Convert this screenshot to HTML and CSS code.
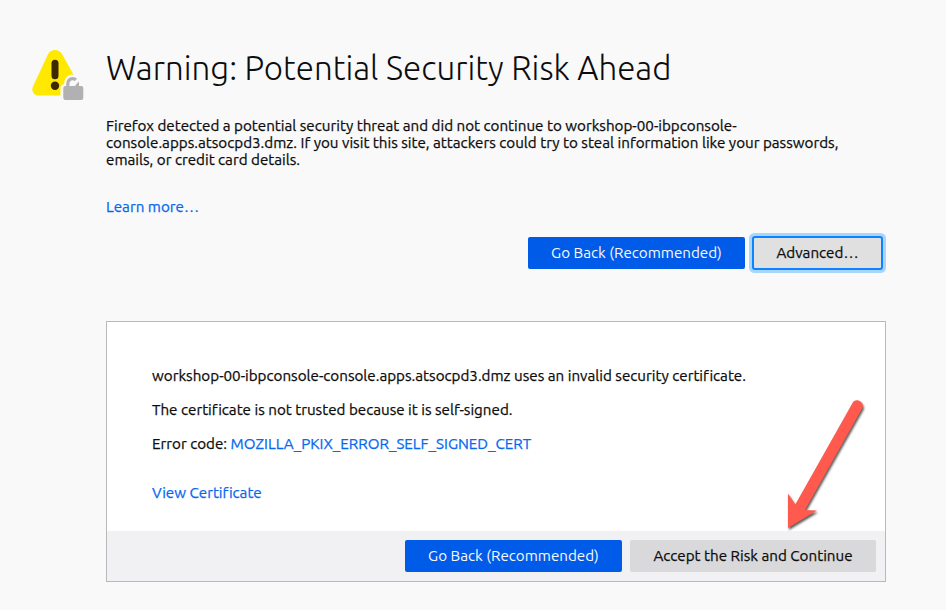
FILE: index.html
```html
<!DOCTYPE html>
<html lang="en">
<head>
<meta charset="utf-8">
<title>Warning: Potential Security Risk Ahead</title>
<link rel="stylesheet" href="styles.css">
</head>
<body>
<main class="page">
  <header class="title-row">
    <svg class="warning-icon" width="54" height="54" viewBox="0 0 54 54" aria-hidden="true">
      <path d="M16 5.300C19.200-.3 26.900-.3 30.100 5.300L44 30L33 46.500H6.500C1.500 46.500-1.200 41.500 1.200 37Z" fill="#ffe900"/>
      <rect x="19.500" y="10.700" width="7" height="19.500" rx="3.500" fill="#3e2800"/>
      <circle cx="23" cy="36.700" r="4.200" fill="#3e2800"/>
      <path d="M28.500 54V39Q28.500 36 32 35Q33 25.500 41 25.500Q49 25.500 50 35Q54 36 54 39V54Z" fill="#f9f9fa"/>
      <path d="M35.800 38V35Q36 29.600 40.800 29.600Q42.800 29.600 44 30.800" fill="none" stroke="#b1b1b3" stroke-width="3.200"/>
      <path d="M43.500 36L47 32.500V38H43.500Z" fill="#b1b1b3"/>
      <rect x="31.300" y="37" width="20" height="14" rx="2" fill="#b1b1b3"/>
    </svg>
    <h1>Warning: Potential Security Risk Ahead</h1>
  </header>
  <section class="intro">
    <p class="summary">Firefox detected a potential security threat and did not continue to workshop-00-ibpconsole-<br>console.apps.atsocpd3.dmz. If you visit this site, attackers could try to steal information like your passwords,<br>emails, or credit card details.</p>
    <a class="learn">Learn more…</a>
    <div class="buttons">
      <button class="primary">Go Back (Recommended)</button>
      <button class="advanced">Advanced…</button>
    </div>
  </section>
  <section class="panel">
    <div class="details">
      <p>workshop-00-ibpconsole-console.apps.atsocpd3.dmz uses an invalid security certificate.</p>
      <p>The certificate is not trusted because it is self-signed.</p>
      <p>Error code: <a>MOZILLA_PKIX_ERROR_SELF_SIGNED_CERT</a></p>
      <a class="view">View Certificate</a>
    </div>
    <footer class="panel-actions">
      <button class="primary">Go Back (Recommended)</button>
      <button class="accept">Accept the Risk and Continue</button>
    </footer>
    <svg class="arrow" width="110" height="140" viewBox="0 0 110 140" aria-hidden="true">
      <path class="arrow-shape" d="M92.800 11.500C95.800 6.500 104.800 10.800 102.500 17L45 118.900L57 119.400L28 137V102.500L35.300 113.500Z"/>
    </svg>
  </section>
</main>
</body>
</html>
```
FILE: styles.css
```css
* { box-sizing: border-box; }
body { margin: 0; background: #f9f9fa; color: #0c0c0d; font: 15.2px/17px "Ubuntu", "Noto Sans", sans-serif; font-variant-ligatures: none; -webkit-text-stroke: .25px currentColor; }
h1, p { margin: 0; white-space: nowrap; }
a { color: #0568ee; }
.page { width: 946px; height: 610px; padding: 49px 60px 0 32px; }
.title-row { display: flex; height: 68px; }
.warning-icon { flex: none; margin-right: 20px; }
h1 { font: 300 33.15px/38px "Ubuntu", "Open Sans", sans-serif; -webkit-text-stroke: 0; }
.intro { margin-left: 74px; }
.summary { height: 51px; }
.learn { display: block; width: max-content; margin-top: 30px; }
.buttons { display: flex; justify-content: flex-end; gap: 8px; margin: 22px 4px 0 0; }
button { height: 32px; padding: 0 0 1px; border: 0; border-radius: 2px; color: #0c0c0d; font: inherit; white-space: nowrap; }
.primary { width: 217px; background: #005ce8; color: #f9f9fa; -webkit-text-stroke: 0; }
.advanced { width: 129px; background: #e0e0e1; outline: 2px solid #0a84ff; outline-offset: -1px; box-shadow: 0 0 0 4px #a9d4fc; }
.panel { position: relative; width: 780px; height: 261px; margin: 52px 0 0 74px; border: 1px solid #b9b9bb; background: #fff; }
.details { display: flex; flex-direction: column; align-items: flex-start; height: 209px; padding: 45px 45px 0; gap: 17px; }
.view { margin-top: 15px; }
.panel-actions { display: flex; justify-content: flex-end; align-items: flex-start; gap: 8px; height: 50px; padding: 9px 9px 0; background: #f1f1f3; }
.accept { width: 246px; background: #d9d9db; }
.arrow { position: absolute; left: 653px; top: 69px; overflow: visible; filter: drop-shadow(1px 2px 1px rgba(0, 0, 0, .65)); }
.arrow-shape { fill: #ff5a4d; }
```
